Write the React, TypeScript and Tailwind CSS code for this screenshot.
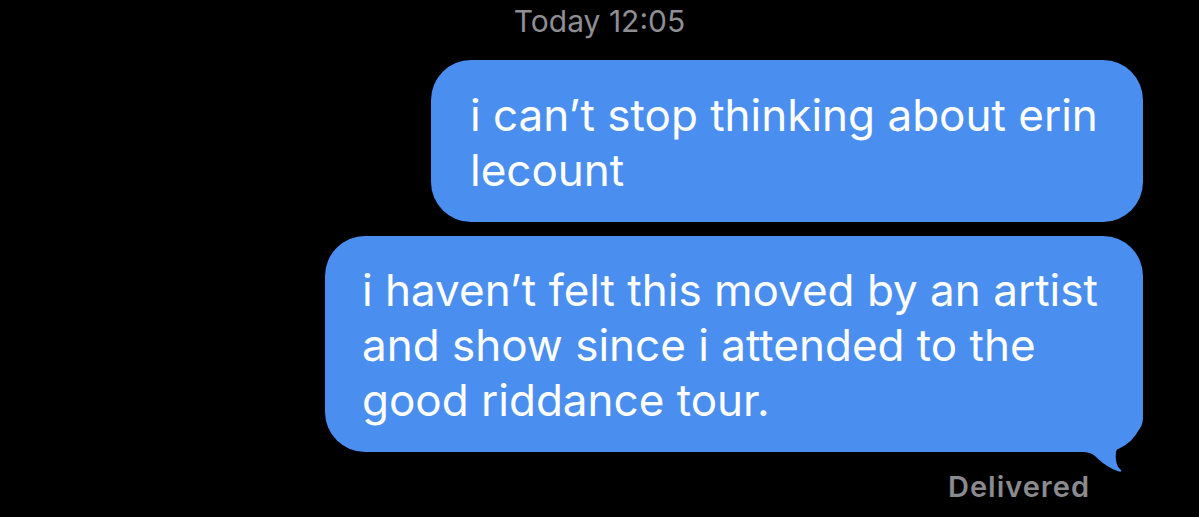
import React from "react";

const BLUE = "bg-[#4a8ff0]";

// tail that replaces the bottom-right corner of the last bubble
const Tail: React.FC = () => (
  <svg
    className="absolute right-0 bottom-[-20px]"
    width="60"
    height="72"
    viewBox="0 0 60 72"
    fill="#4a8ff0"
  >
    <path d="M0 0 H60 V18 C60 30 50 36 42 40 C34 44 32 52 33 60 C33.5 65 35.5 68 38 70 C39 71 38 72 36 71.5 C27 69 18 62 12 56 C8 53 5 52 0 52 Z" />
  </svg>
);

const App: React.FC = () => {
  return (
    <div
      className="w-[1199px] h-[517px] bg-black overflow-hidden flex flex-col"
      style={{ fontFamily: "Inter, 'Helvetica Neue', Arial, sans-serif" }}
    >
      <div className="text-center text-[30px] leading-none font-normal text-[#8e8e93] pt-[6px]">
        Today 12:05
      </div>

      <div className="flex flex-col items-end pr-[56px] mt-[24px]">
        <div className={`${BLUE} w-[712px] rounded-[40px] pl-[39px] pt-[28px] pb-[24px] text-white text-[44px] leading-[55px]`}>
          i can’t stop thinking about erin
          <br />
          lecount
        </div>

        <div className={`${BLUE} relative w-[818px] rounded-[40px] pl-[37px] pt-[27px] pb-[24px] mt-[14px] text-white text-[44px] leading-[55px]`}>
          i haven’t felt this moved by an artist
          <br />
          and show since i attended to the
          <br />
          good riddance tour.
          <Tail />
        </div>

        <div className="text-[29px] leading-none font-semibold tracking-[1px] text-[#8a8a8f] mt-[20px] mr-[53px]">
          Delivered
        </div>
      </div>
    </div>
  );
};

export default App;
